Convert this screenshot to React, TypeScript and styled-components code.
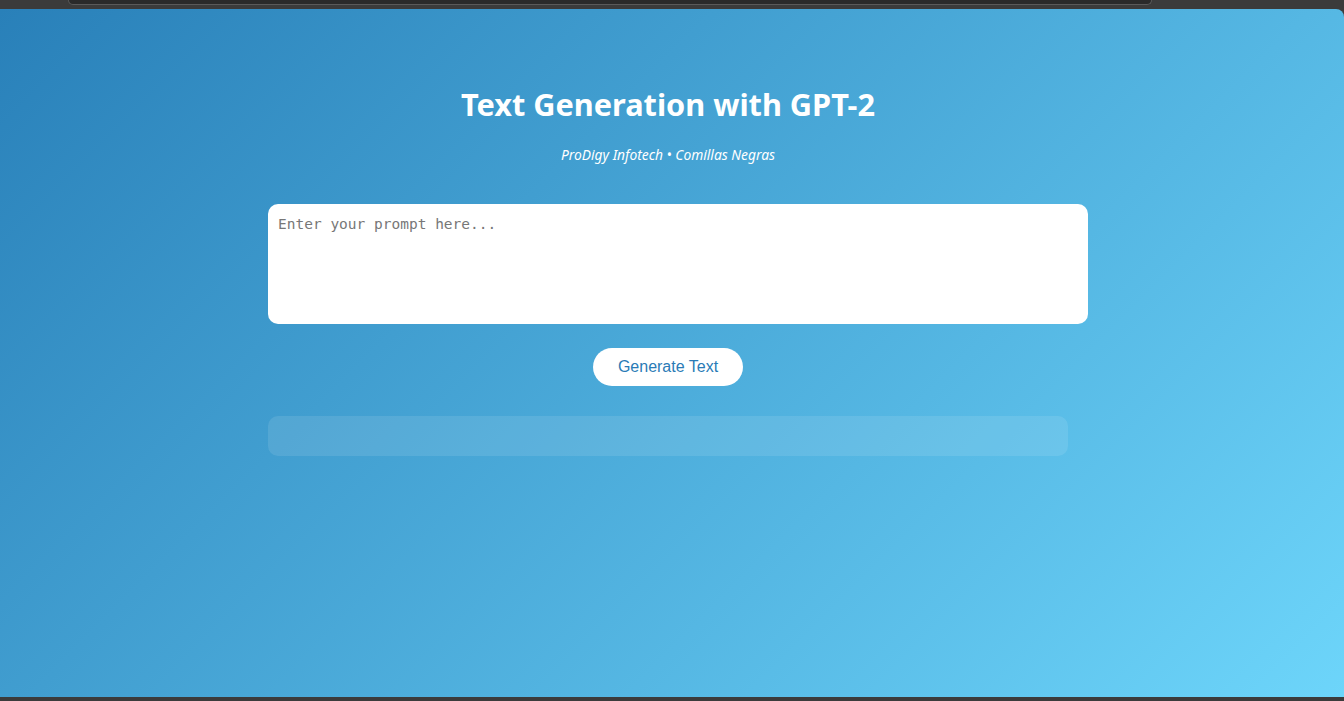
import React, { useState } from 'react';
import styled, { createGlobalStyle } from 'styled-components';

const GlobalStyle = createGlobalStyle`
  html, body {
    margin: 0;
    padding: 0;
    background: #3b3b3b;
    overflow: hidden;
  }
`;

const Frame = styled.div`
  height: 701px;
  display: flex;
  flex-direction: column;
  background: #3b3b3b;
`;

const TopChrome = styled.div`
  height: 9px;
  flex-shrink: 0;
  padding: 0 192px 0 68px;
`;

const AddressBar = styled.div`
  height: 4px;
  background: #2a2a2a;
  border: 1px solid #5a5a5a;
  border-top: none;
  border-radius: 0 0 10px 10px;
`;

const Main = styled.main`
  flex: 1;
  background: linear-gradient(135deg, #2980b9 0%, #6dd5fa 100%);
  border-top-right-radius: 8px;
  display: flex;
  flex-direction: column;
  align-items: center;
  padding: 75px 8px 0 0;
`;

const Container = styled.div`
  width: 800px;
  display: flex;
  flex-direction: column;
  align-items: center;
`;

const BottomChrome = styled.div`
  height: 4px;
  flex-shrink: 0;
`;

const Title = styled.h1`
  margin: 0;
  font-family: 'Noto Sans', 'Open Sans', sans-serif;
  font-weight: 700;
  font-size: 30.7px;
  line-height: 40px;
  color: #ffffff;
  white-space: nowrap;
`;

const Subtitle = styled.p`
  margin: 21px 0 0;
  font-family: 'Noto Sans', 'Open Sans', sans-serif;
  font-style: italic;
  font-size: 13.8px;
  line-height: 20px;
  color: #ffffff;
`;

const PromptInput = styled.textarea`
  margin-top: 39px;
  align-self: flex-start;
  width: 820px;
  flex-shrink: 0;
  height: 120px;
  box-sizing: border-box;
  padding: 10px;
  border: none;
  border-radius: 10px;
  background: #ffffff;
  resize: none;
  outline: none;
  font-family: 'DejaVu Sans Mono', 'Liberation Mono', monospace;
  font-size: 14.5px;
  line-height: 20px;
  color: #333;

  &::placeholder {
    color: #777;
  }
`;

const GenerateButton = styled.button`
  margin-top: 24px;
  width: 150px;
  height: 38px;
  border: none;
  border-radius: 19px;
  background: #ffffff;
  color: #2a7bb6;
  font-family: 'Liberation Sans', Arial, sans-serif;
  font-size: 16px;
  cursor: pointer;
`;

const Output = styled.div`
  margin-top: 30px;
  width: 100%;
  min-height: 40px;
  box-sizing: border-box;
  padding: 10px 20px;
  border-radius: 10px;
  background: rgba(255, 255, 255, 0.1);
  color: #ffffff;
  font-family: 'Noto Sans', sans-serif;
  font-size: 15px;
`;

const App: React.FC = () => {
  const [prompt, setPrompt] = useState('');
  const [result] = useState('');

  return (
    <>
      <GlobalStyle />
      <Frame>
        <TopChrome>
          <AddressBar />
        </TopChrome>
        <Main>
          <Container>
            <Title>Text Generation with GPT-2</Title>
            <Subtitle>ProDigy Infotech • Comillas Negras</Subtitle>
            <PromptInput
              placeholder="Enter your prompt here..."
              value={prompt}
              onChange={(e) => setPrompt(e.target.value)}
            />
            <GenerateButton>Generate Text</GenerateButton>
            <Output>{result}</Output>
          </Container>
        </Main>
        <BottomChrome />
      </Frame>
    </>
  );
};

export default App;
